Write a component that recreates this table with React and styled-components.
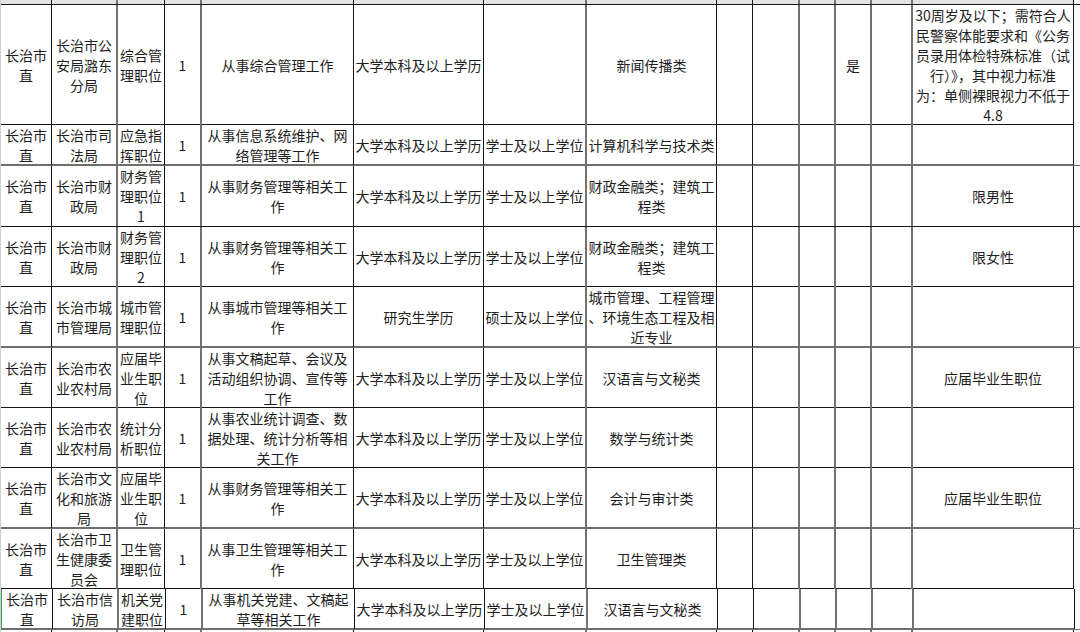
import React from 'react';
import styled, { createGlobalStyle } from 'styled-components';

const GlobalStyle = createGlobalStyle`
  html, body {
    margin: 0;
    padding: 0;
    background: #ffffff;
    overflow: hidden;
  }
  body {
    font-family: "Noto Sans CJK SC", "Noto Sans", sans-serif;
    color: #1e1e1e;
  }
`;

// column widths include the right border, so the lines fall on the sheet's gridlines
const COLS = [51, 66, 47, 37, 152, 130, 103, 130, 36, 47, 36, 36, 41, 161];
const GREY = [1, 3, 6, 9, 10, 11, 12];

const Sheet = styled.div`
  width: 1080px;
  height: 632px;
  overflow: hidden;
  border-left: 1px solid #cfcfcf;
  box-sizing: border-box;
`;

const Row = styled.div`
  display: grid;
  grid-template-columns: ${COLS.map((w) => `${w}px`).join(' ')} 1fr;
  height: ${(p) => p.h}px;
  box-sizing: border-box;
  border-bottom: ${(p) => (p.soft ? '2px solid #6e6e6e' : '1px solid #151515')};
  background: ${(p) => (p.strip ? '#e3e3e3' : '#ffffff')};
  margin-left: ${(p) => (p.selected ? '-1px' : '0')};
  border-left: ${(p) => (p.selected ? '2px solid #3aa35c' : 'none')};
`;

const Cell = styled.div`
  box-sizing: border-box;
  border-right: ${(p) => (p.grey ? '2px solid #727272' : '1px solid #151515')};
  display: flex;
  align-items: center;
  justify-content: center;
  text-align: center;
  font-size: 14px;
  line-height: 20px;
  white-space: nowrap;
  overflow: visible;
  min-width: 0;
`;

const Tail = styled.div`
  box-sizing: border-box;
  background: #fafafa;
`;

const lines = (s) =>
  s.split('/').map((part, i, arr) => (
    <React.Fragment key={i}>
      {part}
      {i < arr.length - 1 && <br />}
    </React.Fragment>
  ));

const rows = [
  {
    h: 120,
    cells: ['长治市/直', '长治市公/安局潞东/分局', '综合管/理职位', '1', '从事综合管理工作', '大学本科及以上学历', '', '新闻传播类', '', '', '', '是', '',
      '30周岁及以下；需符合人/民警察体能要求和《公务/员录用体检特殊标准（试/行）》，其中视力标准/为：单侧裸眼视力不低于/4.8'],
  },
  {
    h: 41, soft: true,
    cells: ['长治市/直', '长治市司/法局', '应急指/挥职位', '1', '从事信息系统维护、网/络管理等工作', '大学本科及以上学历', '学士及以上学位', '计算机科学与技术类', '', '', '', '', '', ''],
  },
  {
    h: 61,
    cells: ['长治市/直', '长治市财/政局', '财务管/理职位/1', '1', '从事财务管理等相关工/作', '大学本科及以上学历', '学士及以上学位', '财政金融类；建筑工/程类', '', '', '', '', '', '限男性'],
  },
  {
    h: 60,
    cells: ['长治市/直', '长治市财/政局', '财务管/理职位/2', '1', '从事财务管理等相关工/作', '大学本科及以上学历', '学士及以上学位', '财政金融类；建筑工/程类', '', '', '', '', '', '限女性'],
  },
  {
    h: 61, soft: true,
    cells: ['长治市/直', '长治市城/市管理局', '城市管/理职位', '1', '从事城市管理等相关工/作', '研究生学历', '硕士及以上学位', '城市管理、工程管理/、环境生态工程及相/近专业', '', '', '', '', '', ''],
  },
  {
    h: 60,
    cells: ['长治市/直', '长治市农/业农村局', '应届毕/业生职/位', '1', '从事文稿起草、会议及/活动组织协调、宣传等/工作', '大学本科及以上学历', '学士及以上学位', '汉语言与文秘类', '', '', '', '', '', '应届毕业生职位'],
  },
  {
    h: 60,
    cells: ['长治市/直', '长治市农/业农村局', '统计分/析职位', '1', '从事农业统计调查、数/据处理、统计分析等相/关工作', '大学本科及以上学历', '学士及以上学位', '数学与统计类', '', '', '', '', '', ''],
  },
  {
    h: 61, soft: true,
    cells: ['长治市/直', '长治市文/化和旅游/局', '应届毕/业生职/位', '1', '从事财务管理等相关工/作', '大学本科及以上学历', '学士及以上学位', '会计与审计类', '', '', '', '', '', '应届毕业生职位'],
  },
  {
    h: 60,
    cells: ['长治市/直', '长治市卫/生健康委/员会', '卫生管/理职位', '1', '从事卫生管理等相关工/作', '大学本科及以上学历', '学士及以上学位', '卫生管理类', '', '', '', '', '', ''],
  },
  {
    h: 41, soft: true, selected: true,
    cells: ['长治市/直', '长治市信/访局', '机关党/建职位', '1', '从事机关党建、文稿起/草等相关工作', '大学本科及以上学历', '学士及以上学位', '汉语言与文秘类', '', '', '', '', '', ''],
  },
];

const emptyRow = COLS.map(() => '');

const SheetRow = ({ cells, ...rest }) => (
  <Row {...rest}>
    {cells.map((c, i) => (
      <Cell key={i} grey={GREY.includes(i)}>
        {c && lines(c)}
      </Cell>
    ))}
    <Tail />
  </Row>
);

export default function App() {
  return (
    <>
      <GlobalStyle />
      <Sheet>
        <SheetRow h={5} strip cells={emptyRow} />
        {rows.map((r, i) => (
          <SheetRow key={i} h={r.h} soft={r.soft} selected={r.selected} cells={r.cells} />
        ))}
        <SheetRow h={20} cells={emptyRow} />
      </Sheet>
    </>
  );
}
